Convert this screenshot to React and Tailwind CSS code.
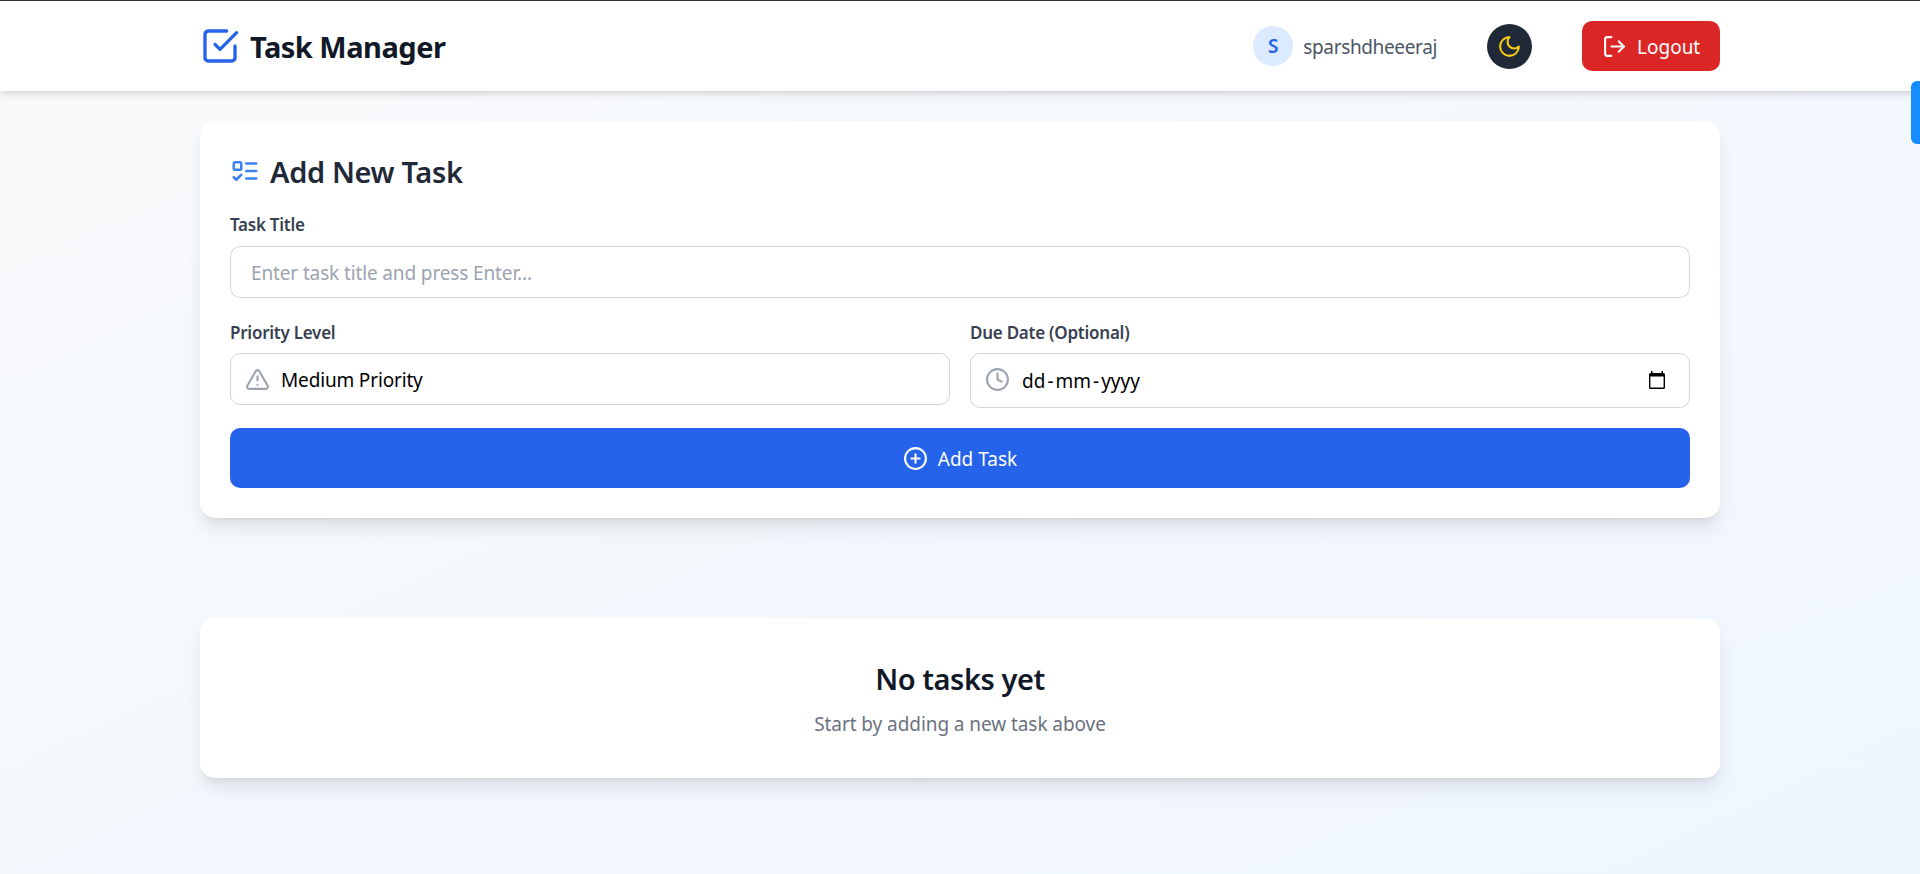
const Icon = ({ className, children }) => (
  <svg viewBox="0 0 24 24" fill="none" stroke="currentColor" strokeWidth="2" strokeLinecap="round" strokeLinejoin="round" className={className}>
    {children}
  </svg>
);

const cardClass = "rounded-[15px] bg-white shadow-[0_12.5px_18.75px_-3.75px_rgba(0,0,0,0.1),0_5px_7.5px_-5px_rgba(0,0,0,0.1)]";

function Navbar() {
  return (
    <nav className="h-[91px] border-t border-[#333333] bg-white shadow-[0_5px_7.5px_-1.25px_rgba(0,0,0,0.1),0_2.5px_5px_-2.5px_rgba(0,0,0,0.1)]">
      <div className="mx-auto flex h-full w-[1520px] items-center justify-between">
        <div className="flex items-center gap-2.5">
          <Icon className="size-10 text-[#2563eb]">
            <path d="m9 11 3 3L22 4" />
            <path d="M21 12v7a2 2 0 0 1-2 2H5a2 2 0 0 1-2-2V5a2 2 0 0 1 2-2h11" />
          </Icon>
          <h1 className="pt-0.5 text-[29px] font-bold leading-10 tracking-[-0.5px] text-[#111827]">Task Manager</h1>
        </div>
        <div className="flex items-center gap-[50px]">
          <div className="flex items-center gap-2.5">
            <div className="flex size-10 items-center justify-center rounded-full bg-[#dbeafe] text-[19px] font-semibold text-[#2563eb]">S</div>
            <span className="pt-0.5 text-[19px] tracking-[-0.36px] text-[#4b5563]">sparshdheeeraj</span>
          </div>
          <button className="rounded-full bg-[#1f2937] p-2.5 text-[#facc15]">
            <Icon className="size-[25px]"><path d="M12 3a6 6 0 0 0 9 9 9 9 0 1 1-9-9Z" /></Icon>
          </button>
          <button className="flex h-[50px] w-[138px] items-center gap-2.5 rounded-[10px] bg-[#dc2626] pl-5 text-[19px] text-white">
            <Icon className="size-[25px]">
              <path d="M9 21H5a2 2 0 0 1-2-2V5a2 2 0 0 1 2-2h4" />
              <path d="m16 17 5-5-5-5" />
              <path d="M21 12H9" />
            </Icon>
            <span className="pt-0.5">Logout</span>
          </button>
        </div>
      </div>
    </nav>
  );
}

const labelClass = "block h-[25px] text-[17px] font-semibold leading-[25px] tracking-[-0.25px] text-[#374151]";

function TaskForm() {
  return (
    <section className={cardClass + " h-[397px] p-[30px]"}>
      <h2 className="mb-[19px] flex h-[42px] items-center gap-2.5 text-[29px] font-semibold leading-[42px] tracking-[-0.35px] text-[#1f2937]">
        <Icon className="mb-0.5 size-[30px] text-[#3b82f6]">
          <rect x="3" y="5" width="6" height="6" rx="1" />
          <path d="m3 17 2 2 4-4M13 6h8M13 12h8M13 18h8" />
        </Icon>
        <span>Add New Task</span>
      </h2>
      <label className={labelClass}>Task Title</label>
      <div className="mb-[22px] mt-[9px] flex h-[52px] items-center rounded-[10px] border border-[#d1d5db] pl-5 text-[19px] tracking-[-0.13px] text-[#9ca3af]">
        <span className="pt-0.5">Enter task title and press Enter...</span>
      </div>
      <div className="mb-5 grid h-[88px] grid-cols-2 gap-5">
        <div>
          <label className={labelClass}>Priority Level</label>
          <div className="mt-2 flex h-[52px] items-center gap-[11px] rounded-[10px] border border-[#d1d5db] pl-[14px] text-[19px] tracking-[-0.16px] text-black">
            <Icon className="size-[25px] text-[#9ca3af]">
              <path d="m21.73 18-8-14a2 2 0 0 0-3.48 0l-8 14A2 2 0 0 0 4 21h16a2 2 0 0 0 1.73-3Z" />
              <path d="M12 9v4M12 17h.01" />
            </Icon>
            <span className="pt-0.5">Medium Priority</span>
          </div>
        </div>
        <div>
          <label className={labelClass}>Due Date (Optional)</label>
          <div className="mt-2 flex h-[55px] items-center rounded-[10px] border border-[#d1d5db] pl-[14px] pr-6 text-[19px] text-black">
            <Icon className="mb-0.5 mr-3 size-[25px] text-[#9ca3af]">
              <circle cx="12" cy="12" r="10" />
              <path d="M12 6v6l4 2" />
            </Icon>
            <span className="pt-px">dd<span className="mx-[2px]">-</span>mm<span className="mx-[2px]">-</span>yyyy</span>
            <svg viewBox="0 0 16 18" className="mb-0.5 ml-auto h-[18px] w-4">
              <path d="M2 0h1.500v2h9V0H14v2h.5A1.500 1.500 0 0 1 16 3.500V16.500A1.500 1.500 0 0 1 14.500 18h-13A1.500 1.500 0 0 1 0 16.500v-13A1.500 1.500 0 0 1 1.500 2H2ZM1.400 5.500v11.100h13.200V5.500Z" fill="black" fillRule="evenodd" />
            </svg>
          </div>
        </div>
      </div>
      <button className="flex h-[60px] w-full items-center justify-center gap-2.5 rounded-[10px] bg-[#2563eb] text-[19px] text-white">
        <Icon className="size-[25px]">
          <circle cx="12" cy="12" r="10" />
          <path d="M8 12h8M12 8v8" />
        </Icon>
        <span className="pt-0.5">Add Task</span>
      </button>
    </section>
  );
}

export default function App() {
  return (
    <div className="relative h-[874px] overflow-hidden bg-linear-to-br from-[#f9fafb] to-[#eff6ff] font-['Noto_Sans',sans-serif]">
      <Navbar />
      <main className="mx-auto flex w-[1520px] flex-col gap-[100px] pt-[30px]">
        <TaskForm />
        <section className={cardClass + " flex h-[160px] flex-col items-center pt-10"}>
          <h3 className="text-[29px] font-semibold leading-[42px] tracking-[-0.45px] text-[#111827]">No tasks yet</h3>
          <p className="mt-[9px] text-[19px] leading-[30px] tracking-[-0.07px] text-[#6b7280]">Start by adding a new task above</p>
        </section>
      </main>
      <div className="absolute right-0 top-[81px] h-[63px] w-[9px] rounded-l-[6px] bg-[#158cff]" />
    </div>
  );
}
